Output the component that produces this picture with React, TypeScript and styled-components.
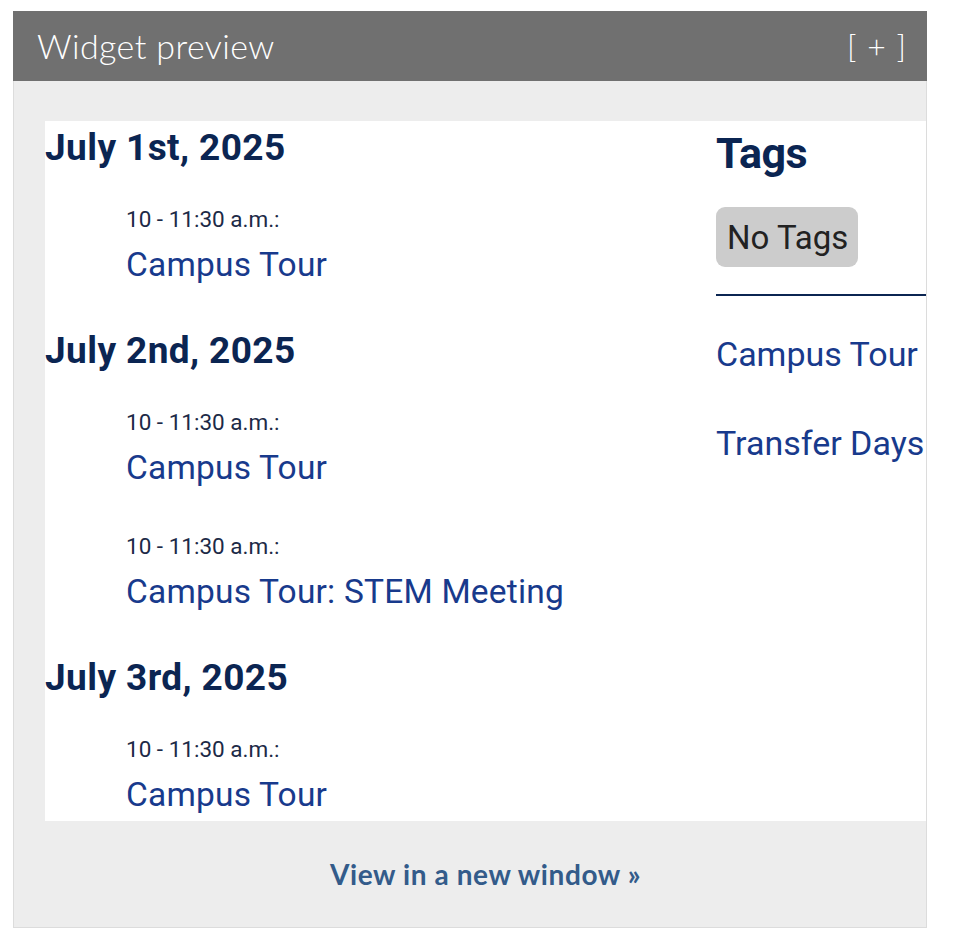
import React from "react";
import styled, { createGlobalStyle } from "styled-components";

const Global = createGlobalStyle`
  html, body { margin: 0; padding: 0; background: #ffffff; }
  body { font-family: Roboto, "Liberation Sans", sans-serif; }
`;

const Page = styled.div`
  padding: 11px 27px 17px 13px;
`;

const Panel = styled.section`
  width: 914px;
`;

const Header = styled.header`
  height: 70px;
  background: #707070;
  color: #ffffff;
  display: flex;
  align-items: center;
  justify-content: space-between;
  padding: 0 20px 2px 24px;
  box-sizing: border-box;
  font-family: Lato, "Open Sans", sans-serif;
  font-weight: 300;
  font-size: 34px;
  letter-spacing: 0.4px;
`;

const Toggle = styled.span`
  font-size: 32px;
  letter-spacing: 1px;
`;

const Body = styled.div`
  background: #ededed;
  border: 1px solid #dcdcdc;
  border-top: none;
  padding: 40px 0 0 31px;
`;

const Content = styled.div`
  background: #ffffff;
  display: grid;
  grid-template-columns: 671px 1fr;
  padding-bottom: 8px;
`;

const Main = styled.div``;

const DayHeading = styled.h2`
  margin: 0;
  font-size: 37px;
  font-weight: 700;
  color: #0b2552;
  line-height: 54px;
  letter-spacing: 0.4px;
`;

const DayGroup = styled.div`
  & + & { margin-top: 41px; }
`;

const Event = styled.div`
  padding-left: 81px;
  margin-top: ${(p: { $first: boolean }) => (p.$first ? 30 : 46)}px;
`;

const Time = styled.div`
  font-size: 22.5px;
  line-height: 28px;
  color: #1c2a47;
`;

const Title = styled.a`
  display: block;
  margin-top: 14px;
  font-size: 33.5px;
  line-height: 36px;
  color: #183a8c;
  text-decoration: none;
  letter-spacing: 0.2px;
`;

const Side = styled.aside`
  display: flex;
  flex-direction: column;
  align-items: flex-start;
`;

const TagsHeading = styled.h3`
  margin: 4px 0 0;
  font-size: 43px;
  line-height: 56px;
  font-weight: 700;
  color: #0b2552;
  letter-spacing: -0.5px;
`;

const Pill = styled.span`
  margin-top: 26px;
  background: #cccccc;
  border-radius: 9px;
  padding: 0 10px 0 11px;
  height: 60px;
  display: flex;
  align-items: center;
  font-size: 33px;
  color: #222222;
`;

const Rule = styled.hr`
  align-self: stretch;
  margin: 27px 0 0;
  border: none;
  border-top: 2px solid #0b2552;
`;

const SideLink = styled.a`
  font-size: 34px;
  line-height: 40px;
  color: #183a8c;
  text-decoration: none;
  white-space: nowrap;
  margin-top: ${(p: { $gap: number }) => p.$gap}px;
`;

const Footer = styled.div`
  height: 106px;
  box-sizing: border-box;
  padding-bottom: 1px;
  display: flex;
  align-items: center;
  justify-content: center;
`;

const FooterLink = styled.a`
  font-family: Lato, "Open Sans", sans-serif;
  font-weight: 700;
  font-size: 28px;
  color: #335b8a;
  text-decoration: none;
  letter-spacing: 0.6px;
`;

const days = [
  { date: "July 1st, 2025", events: ["Campus Tour"] },
  { date: "July 2nd, 2025", events: ["Campus Tour", "Campus Tour: STEM Meeting"] },
  { date: "July 3rd, 2025", events: ["Campus Tour"] },
];

export default function App() {
  return (
    <Page>
      <Global />
      <Panel>
        <Header>
          <span>Widget preview</span>
          <Toggle>[ + ]</Toggle>
        </Header>
        <Body>
          <Content>
            <Main>
              {days.map((d) => (
                <DayGroup key={d.date}>
                  <DayHeading>{d.date}</DayHeading>
                  {d.events.map((e, i) => (
                    <Event key={i} $first={i === 0}>
                      <Time>10 - 11:30 a.m.:</Time>
                      <Title href="#">{e}</Title>
                    </Event>
                  ))}
                </DayGroup>
              ))}
            </Main>
            <Side>
              <TagsHeading>Tags</TagsHeading>
              <Pill>No Tags</Pill>
              <Rule />
              <SideLink href="#" $gap={38}>Campus Tour</SideLink>
              <SideLink href="#" $gap={49}>Transfer Days</SideLink>
            </Side>
          </Content>
          <Footer>
            <FooterLink href="#">View in a new window »</FooterLink>
          </Footer>
        </Body>
      </Panel>
    </Page>
  );
}
